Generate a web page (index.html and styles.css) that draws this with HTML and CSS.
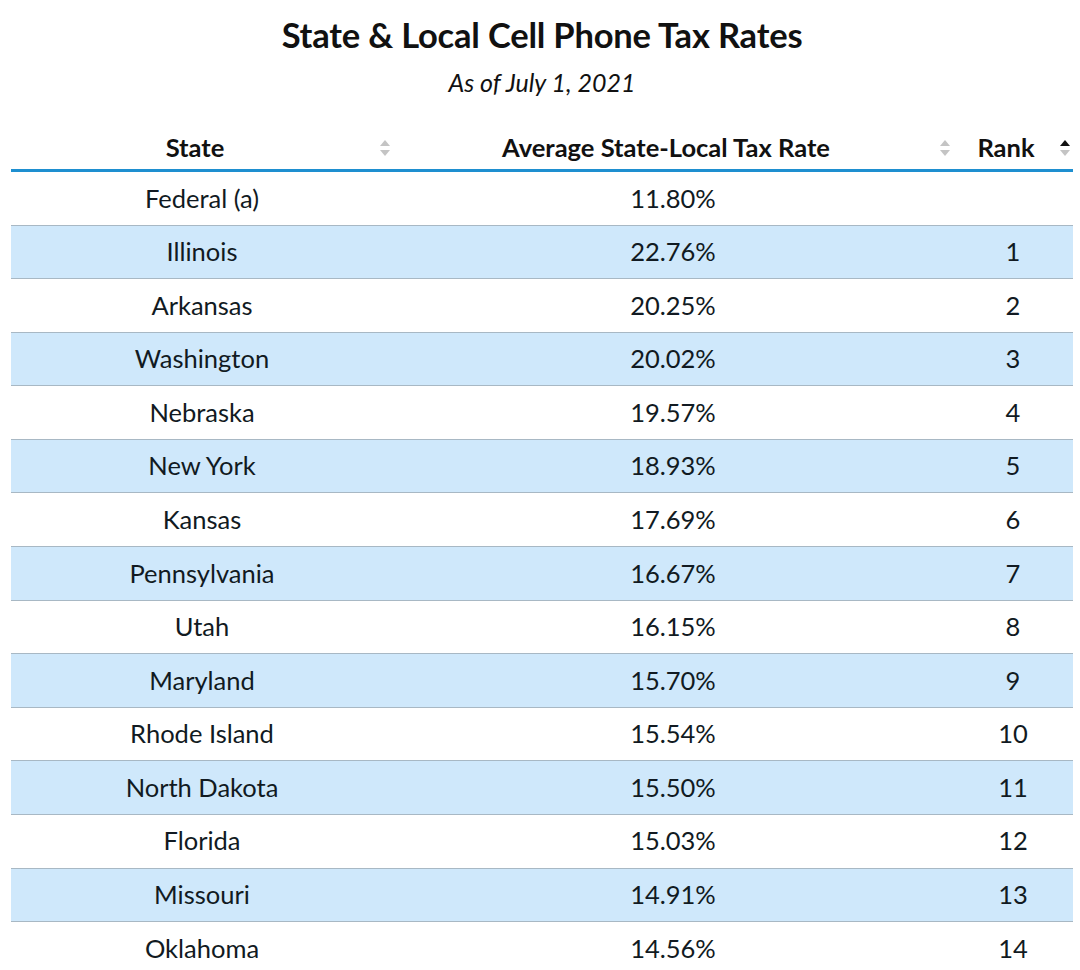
FILE: index.html
```html
<!DOCTYPE html>
<html>
<head>
<meta charset="utf-8">
<link rel="stylesheet" href="styles.css">
</head>
<body>
<div class="page">
  <h1 class="title">State &amp; Local Cell Phone Tax Rates</h1>
  <p class="subtitle">As of July 1, 2021</p>
  <table class="tbl">
    <colgroup><col class="c1"><col class="c2"><col class="c3"></colgroup>
    <thead>
      <tr>
        <th><span class="hd">State</span><span class="sort"><i class="up"></i><i class="down"></i></span></th>
        <th><span class="hd">Average State-Local Tax Rate</span><span class="sort"><i class="up"></i><i class="down"></i></span></th>
        <th><span class="hd">Rank</span><span class="sort"><i class="up on"></i><i class="down"></i></span></th>
      </tr>
    </thead>
    <tbody>
      <tr><td>Federal (a)</td><td>11.80%</td><td></td></tr>
      <tr><td>Illinois</td><td>22.76%</td><td>1</td></tr>
      <tr><td>Arkansas</td><td>20.25%</td><td>2</td></tr>
      <tr><td>Washington</td><td>20.02%</td><td>3</td></tr>
      <tr><td>Nebraska</td><td>19.57%</td><td>4</td></tr>
      <tr><td>New York</td><td>18.93%</td><td>5</td></tr>
      <tr><td>Kansas</td><td>17.69%</td><td>6</td></tr>
      <tr><td>Pennsylvania</td><td>16.67%</td><td>7</td></tr>
      <tr><td>Utah</td><td>16.15%</td><td>8</td></tr>
      <tr><td>Maryland</td><td>15.70%</td><td>9</td></tr>
      <tr><td>Rhode Island</td><td>15.54%</td><td>10</td></tr>
      <tr><td>North Dakota</td><td>15.50%</td><td>11</td></tr>
      <tr><td>Florida</td><td>15.03%</td><td>12</td></tr>
      <tr><td>Missouri</td><td>14.91%</td><td>13</td></tr>
      <tr><td>Oklahoma</td><td>14.56%</td><td>14</td></tr>
    </tbody>
  </table>
</div>
</body>
</html>
```
FILE: styles.css
```css
html, body {
  margin: 0;
  padding: 0;
  background: #fff;
}
body {
  font-family: Lato, "Open Sans", sans-serif;
  color: #111a22;
  overflow: hidden;
}
.page {
  padding: 14px 7px 0 11px;
}
.title {
  margin: 0;
  text-align: center;
  font-size: 34.5px;
  font-weight: 700;
  line-height: 42px;
  color: #111;
  letter-spacing: -0.2px;
}
.subtitle {
  margin: 10px 0 0;
  text-align: center;
  font-style: italic;
  font-size: 25px;
  line-height: 32px;
  color: #111;
}
.tbl {
  margin-top: 27px;
  width: 1062px;
  border-collapse: collapse;
  table-layout: fixed;
  font-size: 25.5px;
}
.c1 { width: 382px; }
.c2 { width: 560px; }
.c3 { width: 120px; }
.tbl th {
  position: relative;
  height: 44px;
  padding: 0 14px 0 0;
  font-weight: 700;
  text-align: center;
  border-bottom: 3px solid #1e8fd0;
  color: #111;
}
.hd {
  display: inline-block;
}
.sort {
  position: absolute;
  right: 2px;
  top: 15px;
  width: 12px;
  height: 16px;
  display: flex;
  flex-direction: column;
  justify-content: space-between;
  align-items: center;
}
.sort i {
  width: 0;
  height: 0;
  border-left: 5.5px solid transparent;
  border-right: 5.5px solid transparent;
}
.sort .up { border-bottom: 6px solid #c4c4c4; }
.sort .down { border-top: 6px solid #c4c4c4; }
.sort .up.on { border-bottom-color: #111; }
.tbl td {
  height: 52.58px;
  padding: 0;
  text-align: center;
  border-bottom: 1px solid #a8b8c4;
  line-height: 1;
}
.tbl tbody tr:nth-child(even) td {
  background: #cfe8fb;
}
```
